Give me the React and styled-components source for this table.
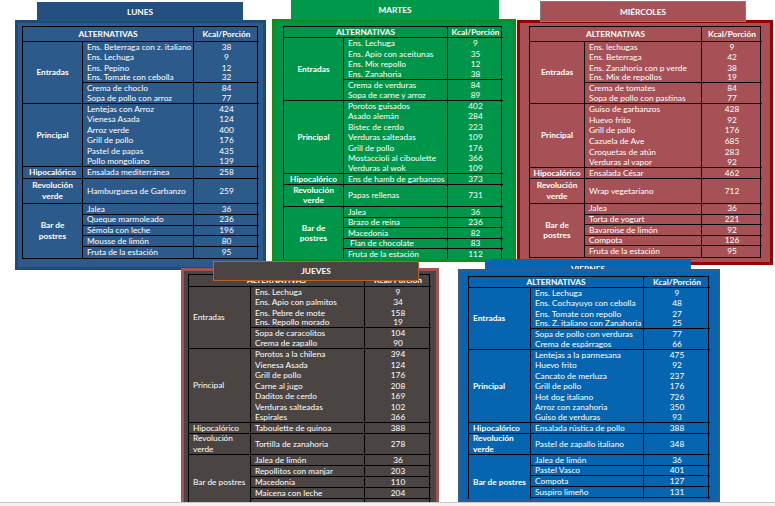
import { Fragment } from 'react';
import styled, { createGlobalStyle } from 'styled-components';

const GlobalStyle = createGlobalStyle`
    body {
        margin: 0;
        background: #f2f2f2;
        font-family: Lato, "Liberation Sans", sans-serif;
    }
`

const it = (name, kcal) => ({ name, kcal })

const days = [
    {
        name: 'LUNES',
        theme: { bg: '#2c5a8b', border: '#204b79', tab: '#24507f', tabBorder: '#24507f' },
        card: { x: 15, y: 20, w: 251, h: 250, pl: 4, pt: 3 },
        tab: { x: 37, y: 2, w: 206, h: 19 },
        cols: [60, 111, 65],
        h: { head: 15, entradas: 10.33, principal: 10.5, hipo: 12, rev: 25, bar: 10.8 },
        catBold: true,
        sections: [
            { kind: 'entradas', label: 'Entradas', groups: [
                [it('Ens. Beterraga con z. italiano', 38), it('Ens. Lechuga', 9), it('Ens. Pepino', 12), it('Ens. Tomate con cebolla', 32)],
                [it('Crema de choclo', 84), it('Sopa de pollo con arroz', 77)],
            ] },
            { kind: 'principal', label: 'Principal', groups: [
                [it('Lentejas con Arroz', 424), it('Vienesa Asada', 124), it('Arroz verde', 400), it('Grill de pollo', 176), it('Pastel de papas', 435), it('Pollo mongoliano', 139)],
            ] },
            { kind: 'hipo', label: 'Hipocalórico', groups: [[it('Ensalada mediterránea', 258)]] },
            { kind: 'rev', label: 'Revolución\nverde', groups: [[it('Hamburguesa de Garbanzo', 259)]] },
            { kind: 'bar', label: 'Bar de\npostres', groups: [
                [it('Jalea', 36)], [it('Queque marmoleado', 236)], [it('Sémola con leche', 196)], [it('Mousse de limón', 80)], [it('Fruta de la estación', 95)],
            ] },
        ],
    },
    {
        name: 'MARTES',
        theme: { bg: '#00964a', border: '#168a1c', tab: '#00984b', tabBorder: '#00984b' },
        card: { x: 272, y: 19, w: 244, h: 243, pl: 8, pt: 4 },
        tab: { x: 291, y: 0, w: 208, h: 20 },
        cols: [60, 104, 55],
        h: { head: 11, entradas: 10.5, principal: 10.43, hipo: 11, rev: 22, bar: 10.6 },
        catBold: true,
        sections: [
            { kind: 'entradas', label: 'Entradas', groups: [
                [it('Ens. Lechuga', 9), it('Ens. Apio con aceitunas', 35), it('Ens. Mix repollo', 12), it('Ens. Zanahoria', 38)],
                [it('Crema de verduras', 84), it('Sopa de carne y arroz', 89)],
            ] },
            { kind: 'principal', label: 'Principal', groups: [
                [it('Porotos guisados', 402), it('Asado alemán', 284), it('Bistec de cerdo', 223), it('Verduras salteadas', 109), it('Grill de pollo', 176), it('Mostaccioli al ciboulette', 366), it('Verduras al wok', 109)],
            ] },
            { kind: 'hipo', label: 'Hipocalórico', groups: [[it('Ens de hamb de garbanzos', 373)]] },
            { kind: 'rev', label: 'Revolución\nverde', groups: [[it('Papas rellenas', 731)]] },
            { kind: 'bar', label: 'Bar de\npostres', groups: [
                [it('Jalea', 36)], [it('Brazo de reina', 236)], [it('Macedonia', 82)], [it('\u00a0Flan de chocolate', 83)], [it('Fruta de la estación', 112)],
            ] },
        ],
    },
    {
        name: 'MIÉRCOLES',
        theme: { bg: '#a65155', border: '#990000', tab: '#a65155', tabBorder: '#7f7f7f' },
        card: { x: 517, y: 20, w: 256, h: 245, pl: 9, pt: 3 },
        tab: { x: 540, y: 1, w: 206, h: 21 },
        cols: [55, 117, 60],
        h: { head: 15, entradas: 10.33, principal: 10.67, hipo: 11, rev: 25, bar: 10.6 },
        catBold: true,
        sections: [
            { kind: 'entradas', label: 'Entradas', groups: [
                [it('Ens. lechugas', 9), it('Ens. Beterraga', 42), it('Ens. Zanahoria con p verde', 38), it('Ens. Mix de repollos', 19)],
                [it('Crema de tomates', 84), it('Sopa de pollo con pastinas', 77)],
            ] },
            { kind: 'principal', label: 'Principal', groups: [
                [it('Guiso de garbanzos', 428), it('Huevo frito', 92), it('Grill de pollo', 176), it('Cazuela de Ave', 685), it('Croquetas de atún', 283), it('Verduras al vapor', 92)],
            ] },
            { kind: 'hipo', label: 'Hipocalórico', groups: [[it('Ensalada César', 462)]] },
            { kind: 'rev', label: 'Revolución\nverde', groups: [[it('Wrap vegetariano', 712)]] },
            { kind: 'bar', label: 'Bar de\npostres', groups: [
                [it('Jalea', 36)], [it('Torta de yogurt', 221)], [it('Bavaroise de limón', 92)], [it('Compota', 126)], [it('Fruta de la estación', 95)],
            ] },
        ],
    },
    {
        name: 'VIERNES',
        theme: { bg: '#0665b0', border: '#2c5c92', tab: '#0866b1', tabBorder: '#0866b1' },
        card: { x: 458, y: 269, w: 262, h: 233, pl: 7, pt: 4 },
        tab: { x: 485, y: 259, w: 206, h: 19 },
        cols: [62, 113, 66],
        h: { head: 11, entradas: 10.33, principal: 10.43, hipo: 11, rev: 21, bar: 10.75 },
        catBold: true,
        catLeft: true,
        tabUnder: true,
        sections: [
            { kind: 'entradas', label: 'Entradas', groups: [
                [it('Ens. Lechuga', 9), it('Ens. Cochayuyo con cebolla', 48), it('Ens. Tomate con repollo', 27), it('Ens. Z. italiano con Zanahoria', 25)],
                [it('Sopa de pollo con verduras', 77), it('Crema de espárragos', 66)],
            ] },
            { kind: 'principal', label: 'Principal', groups: [
                [it('Lentejas a la parmesana', 475), it('Huevo frito', 92), it('Cancato de merluza', 237), it('Grill de pollo', 176), it('Hot dog italiano', 726), it('Arroz con zanahoria', 350), it('Guiso de verduras', 93)],
            ] },
            { kind: 'hipo', label: 'Hipocalórico', groups: [[it('Ensalada rústica de pollo', 388)]] },
            { kind: 'rev', label: 'Revolución\nverde', groups: [[it('Pastel de zapallo italiano', 348)]] },
            { kind: 'bar', label: 'Bar de postres', groups: [
                [it('Jalea de limón', 36)], [it('Pastel Vasco', 401)], [it('Compota', 127)], [it('Suspiro limeño', 131)], [it('', '')],
            ] },
        ],
    },
    {
        name: 'JUEVES',
        theme: { bg: '#4a4542', border: '#a45354', tab: '#4a4542', tabBorder: '#b6622c' },
        card: { x: 181, y: 268, w: 258, h: 260, pl: 4, pt: 3 },
        tab: { x: 213, y: 261, w: 206, h: 20 },
        cols: [62, 114, 66],
        h: { head: 12, entradas: 10.33, principal: 10.57, hipo: 11, rev: 21, bar: 11 },
        catBold: false,
        catLeft: true,
        sections: [
            { kind: 'entradas', label: 'Entradas', groups: [
                [it('Ens. Lechuga', 9), it('Ens. Apio con palmitos', 34), it('Ens. Pebre de mote', 158), it('Ens. Repollo morado', 19)],
                [it('Sopa de caracolitos', 104), it('Crema de zapallo', 90)],
            ] },
            { kind: 'principal', label: 'Principal', groups: [
                [it('Porotos a la chilena', 394), it('Vienesa Asada', 124), it('Grill de pollo', 176), it('Carne al jugo', 208), it('Daditos de cerdo', 169), it('Verduras salteadas', 102), it('Espirales', 366)],
            ] },
            { kind: 'hipo', label: 'Hipocalórico', groups: [[it('Taboulette de quinoa', 388)]] },
            { kind: 'rev', label: 'Revolución\nverde', groups: [[it('Tortilla de zanahoria', 278)]] },
            { kind: 'bar', label: 'Bar de postres', groups: [
                [it('Jalea de limón', 36)], [it('Repollitos con manjar', 203)], [it('Macedonia', 110)], [it('Maicena con leche', 204)], [it('', '')],
            ] },
        ],
    },
]

const MenuTable = ({ day }) => {
    const rows = [day.h.head]
    day.sections.forEach((s) => s.groups.flat().forEach(() => rows.push(day.h[s.kind])))

    return (
        <Grid $cols={day.cols} $rows={rows}>
            <Head $span={2} $end>ALTERNATIVAS</Head>
            <Head>Kcal/Porción</Head>
            {day.sections.map((s, si) => {
                const items = s.groups.flatMap((g) => g.map((x, i) => ({ ...x, end: i === g.length - 1 })))
                const lastSection = si === day.sections.length - 1
                return (
                    <Fragment key={s.kind}>
                        <Cat $span={items.length} $bold={day.catBold} $left={day.catLeft} $end={!lastSection}>
                            {s.label}
                        </Cat>
                        {items.map((x, i) => {
                            const end = x.end && !(lastSection && i === items.length - 1)
                            return (
                                <Fragment key={x.name + i}>
                                    <Name $end={end}>{x.name}</Name>
                                    <Kcal $end={end}>{x.kcal}</Kcal>
                                </Fragment>
                            )
                        })}
                    </Fragment>
                )
            })}
        </Grid>
    )
}

const DayCard = ({ day }) => {
    const tab = <Tab $pos={day.tab} $theme={day.theme}>{day.name}</Tab>
    return (
        <>
            {day.tabUnder && tab}
            <Card $pos={day.card} $theme={day.theme}>
                <MenuTable day={day} />
            </Card>
            {!day.tabUnder && tab}
        </>
    )
}

const App = () => {
    return (
        <>
            <GlobalStyle />
            <Canvas>
                {days.map((d) => <DayCard key={d.name} day={d} />)}
            </Canvas>
        </>
    )
}

const Canvas = styled.div`
    position: relative;
    width: 775px;
    height: 502px;
    overflow: hidden;
    background: #fff;
    border-bottom: 1px solid #c8c8c8;
`

const Card = styled.div`
    position: absolute;
    left: ${(p) => p.$pos.x}px;
    top: ${(p) => p.$pos.y}px;
    width: ${(p) => p.$pos.w}px;
    height: ${(p) => p.$pos.h}px;
    box-sizing: border-box;
    padding: ${(p) => p.$pos.pt}px 0 0 ${(p) => p.$pos.pl}px;
    border: 3px solid ${(p) => p.$theme.border};
    background: ${(p) => p.$theme.bg};
    overflow: hidden;
`

const Tab = styled.div`
    position: absolute;
    left: ${(p) => p.$pos.x}px;
    top: ${(p) => p.$pos.y}px;
    width: ${(p) => p.$pos.w}px;
    height: ${(p) => p.$pos.h}px;
    box-sizing: border-box;
    display: flex;
    align-items: center;
    justify-content: center;
    background: ${(p) => p.$theme.tab};
    border: 1px solid ${(p) => p.$theme.tabBorder};
    color: #fff;
    font-size: 8.3px;
    font-weight: 700;
`

const Grid = styled.div`
    display: grid;
    grid-template-columns: ${(p) => p.$cols.map((c) => c + 'px').join(' ')};
    grid-template-rows: ${(p) => p.$rows.map((r) => r + 'px').join(' ')};
    width: ${(p) => p.$cols.reduce((a, b) => a + b, 0)}px;
    box-sizing: border-box;
    border: 1px solid #000;
    color: #fff;
    font-size: 8.3px;
    line-height: 10.5px;
`

const Cell = styled.div`
    display: flex;
    align-items: center;
    box-sizing: border-box;
    white-space: nowrap;
    overflow: hidden;
    border-bottom: ${(p) => (p.$end ? '1px solid #000' : 'none')};
`

const Head = styled(Cell)`
    grid-column: span ${(p) => p.$span || 1};
    justify-content: center;
    font-weight: 700;
    border-bottom: 1px solid #000;
    border-right: ${(p) => (p.$end ? '1px solid #000' : 'none')};
`

const Cat = styled(Cell)`
    grid-row: span ${(p) => p.$span};
    justify-content: ${(p) => (p.$left ? 'flex-start' : 'center')};
    text-align: ${(p) => (p.$left ? 'left' : 'center')};
    padding-left: ${(p) => (p.$left ? '4px' : '0')};
    white-space: pre-line;
    font-weight: ${(p) => (p.$bold ? 700 : 400)};
    border-right: 1px solid #000;
`

const Name = styled(Cell)`
    padding-left: 4px;
    border-right: 1px solid #000;
`

const Kcal = styled(Cell)`
    justify-content: center;
`

export default App
